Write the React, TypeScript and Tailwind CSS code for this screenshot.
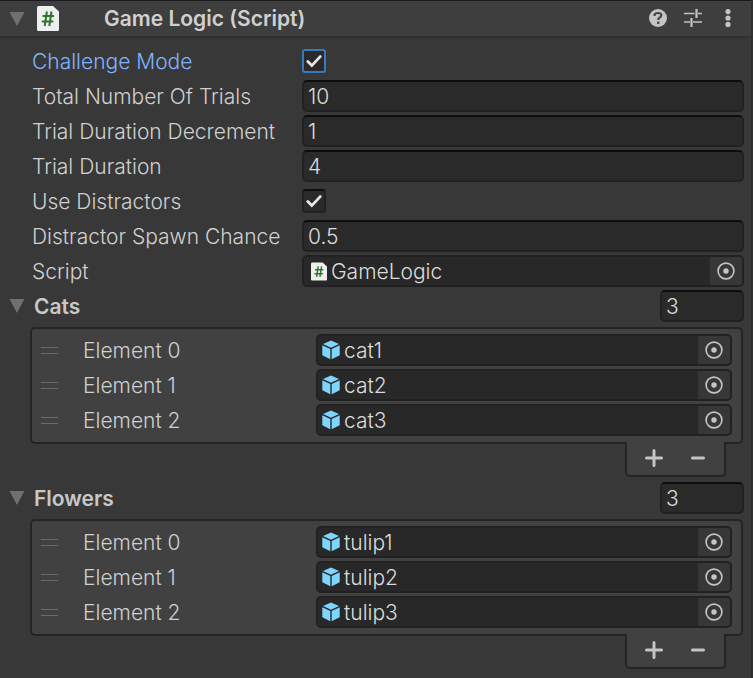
import { useState } from "react";

function Foldout() {
  return (
    <svg viewBox="0 0 16 14" className="h-[14px] w-[16px] shrink-0" fill="#707070" aria-hidden="true">
      <path d="M0.500 0H15.500L8 14Z" />
    </svg>
  );
}

function ScriptIcon({ className }: { className: string }) {
  return (
    <svg viewBox="0 0 22 25" className={className} aria-hidden="true">
      <path d="M1.500 0H16L22 5.500V23.500Q22 25 20.500 25H1.500Q0 25 0 23.500V1.500Q0 0 1.500 0Z" fill="#efefef" />
      <path d="M9.900 5.500L7.700 20M14.500 5.500L12.300 20M5.500 10H17M4.800 15.500H16.300" stroke="#2f7431" strokeWidth="2" fill="none" />
    </svg>
  );
}

function CubeIcon() {
  return (
    <svg viewBox="0 0 18 20" className="h-[20px] w-[18px] shrink-0" fill="#7fd6fd" aria-hidden="true">
      <path d="M9 0.500L17 4L9 7.700L1 4Z" />
      <path d="M0.300 5.200L8.300 9V19.300L0.300 15.200Z" />
      <path d="M17.700 5.200L9.700 9V19.300L17.700 15.200Z" />
    </svg>
  );
}

function PickerIcon() {
  return (
    <svg viewBox="0 0 18 18" className="h-[18px] w-[18px]" aria-hidden="true">
      <circle cx="9" cy="9" r="7.900" fill="none" stroke="#c4c4c4" strokeWidth="1.600" />
      <circle cx="9" cy="9" r="2.700" fill="#c4c4c4" />
    </svg>
  );
}

const inputBox =
  "h-8 min-w-0 rounded-[5px] border-2 border-[#212121] border-t-[#0d0d0d] bg-[#2a2a2a] pt-px pl-1 text-[21px] leading-7 text-[#dcdcdc] outline-none";

function Row({ id, label, active, children }: { id: string; label: string; active?: boolean; children: React.ReactNode }) {
  return (
    <div className="flex h-8 items-center">
      <label htmlFor={id} className={`w-[270px] shrink-0 pt-0.5 whitespace-nowrap ${active ? "text-[#81b4ff]" : "text-[#d0d0d0]"}`}>
        {label}
      </label>
      {children}
    </div>
  );
}

function NumberRow({ id, label, value }: { id: string; label: string; value: string }) {
  return (
    <Row id={id} label={label}>
      <input id={id} type="text" inputMode="decimal" defaultValue={value} className={`${inputBox} flex-1`} />
    </Row>
  );
}

function ToggleRow({ id, label, active }: { id: string; label: string; active?: boolean }) {
  const [on, setOn] = useState(true);
  return (
    <Row id={id} label={label} active={active}>
      <span className="relative flex h-6 w-6">
        <input
          id={id}
          type="checkbox"
          checked={on}
          onChange={(e) => setOn(e.target.checked)}
          className={`h-6 w-6 appearance-none rounded-[3px] border-2 bg-[#2a2a2a] ${active ? "border-[#3a79bb]" : "border-[#212121] border-t-[#0d0d0d]"}`}
        />
        {on && (
          <svg viewBox="0 0 24 24" className="pointer-events-none absolute inset-0 h-6 w-6" aria-hidden="true">
            <path d="M5.800 12.600L9.800 16.600L18.200 7.600" fill="none" stroke="#e8e8e8" strokeWidth="2.800" strokeLinecap="round" />
          </svg>
        )}
      </span>
    </Row>
  );
}

function ObjectField({ id, value, label, icon }: { id: string; value: string; label: string; icon: React.ReactNode }) {
  return (
    <div className="flex h-8 min-w-0 flex-1 items-center overflow-hidden rounded-[5px] border-2 border-[#212121] bg-[#282828] pl-1">
      {icon}
      <input id={id} type="text" readOnly value={value} className="h-7 min-w-0 flex-1 bg-transparent pt-0.5 pl-1 text-[21px] leading-7 text-[#dcdcdc] outline-none" />
      <button type="button" aria-label={`Select ${label}`} className="flex h-7 w-8 shrink-0 items-center justify-center bg-[#373737]">
        <PickerIcon />
      </button>
    </div>
  );
}

function ListSection({ title, items }: { title: string; items: string[] }) {
  const key = title.toLowerCase();
  return (
    <section className="flex flex-col gap-[5px] pr-[9px]">
      <div className="flex h-8 items-center pl-[9px]">
        <button type="button" aria-label={`Toggle ${title}`}>
          <Foldout />
        </button>
        <label htmlFor={`${key}-size`} className="flex-1 pt-0.5 pl-[9px] font-semibold text-[#c8c8c8]">
          {title}
        </label>
        <input id={`${key}-size`} type="text" inputMode="numeric" defaultValue={items.length} className={`${inputBox} w-[84px]`} />
      </div>
      <div className="flex flex-col pr-px pl-[30px]">
        <div className="flex flex-col gap-[3px] rounded-[5px] border-2 border-[#242424] bg-[#414141] pt-[5px] pr-[9px] pb-[6px] pl-[9px]">
          {items.map((item, i) => (
            <div key={item} className="flex h-8 items-center">
              <span className="h-[7px] w-[17px] shrink-0 border-y border-[#6a6a6a]" />
              <label htmlFor={`${key}-${i}`} className="w-[258px] shrink-0 pt-0.5 pl-[25px] text-[#d0d0d0]">
                Element {i}
              </label>
              <ObjectField id={`${key}-${i}`} value={item} label={item} icon={<CubeIcon />} />
            </div>
          ))}
        </div>
        <div className="-mt-[2px] mr-[17px] flex h-[35px] w-[101px] items-start justify-center self-end rounded-b-[5px] border-2 border-t-0 border-[#242424] bg-[#414141]">
          <button type="button" aria-label={`Add to ${title}`} className="flex h-8 w-11 items-center justify-center">
            <svg viewBox="0 0 18 18" className="h-[18px] w-[18px]" aria-hidden="true">
              <path d="M9 1.500V16.500M1.500 9H16.500" stroke="#c4c4c4" strokeWidth="3" strokeLinecap="round" />
            </svg>
          </button>
          <button type="button" aria-label={`Remove from ${title}`} className="flex h-8 w-11 items-center justify-center">
            <svg viewBox="0 0 18 18" className="h-[18px] w-[18px]" aria-hidden="true">
              <path d="M3.500 9H14.500" stroke="#c4c4c4" strokeWidth="3" strokeLinecap="round" />
            </svg>
          </button>
        </div>
      </div>
    </section>
  );
}

export default function App() {
  return (
    <main className="min-h-screen border-r-2 border-[#303030] bg-[#383838] font-['Inter','Liberation_Sans',sans-serif] text-[21px] leading-7 font-light">
      <header className="flex h-[38px] items-center border-t border-b-2 border-t-[#1a1a1a] border-b-[#303030] bg-[#3e3e3e] pr-[14px] pl-[9px]">
        <button type="button" aria-label="Toggle component">
          <Foldout />
        </button>
        <ScriptIcon className="ml-3 h-[25px] w-[22px] shrink-0" />
        <h1 className="flex-1 pl-[45px] font-semibold whitespace-nowrap text-[#d0d0d0]">Game Logic (Script)</h1>
        <div className="flex items-center gap-[17px] pb-px">
          <button type="button" aria-label="Help">
            <svg viewBox="0 0 18 18" className="h-[18px] w-[18px]" aria-hidden="true">
              <circle cx="9" cy="9" r="9" fill="#c4c4c4" />
              <path d="M5.500 7V6.500Q5.500 4 9 4Q12.300 4 12.300 6.300Q12.300 7.800 10.500 8.700Q9.200 9.400 9.200 11" fill="none" stroke="#484848" strokeWidth="2.200" />
              <path d="M8 12.500H10.400V14.900H8Z" fill="#484848" />
            </svg>
          </button>
          <button type="button" aria-label="Presets">
            <svg viewBox="0 0 18 18" className="h-[18px] w-[18px]" fill="none" stroke="#c4c4c4" aria-hidden="true">
              <path d="M0 4.500H10.500M14 4.500H18M0 13H6M9 13H18" strokeWidth="1.600" />
              <path d="M12.500 0V9M7.500 9V18" strokeWidth="2.200" />
            </svg>
          </button>
          <button type="button" aria-label="More options">
            <svg viewBox="0 0 18 18" className="h-[18px] w-[18px]" fill="#c4c4c4" aria-hidden="true">
              <circle cx="9" cy="2.600" r="2.600" />
              <circle cx="9" cy="9" r="2.600" />
              <circle cx="9" cy="15.400" r="2.600" />
            </svg>
          </button>
        </div>
      </header>
      <div className="-mr-[2px] flex flex-col gap-[3px] pt-[7px]">
        <div className="flex flex-col gap-[3px] pr-[9px] pl-8">
          <ToggleRow id="challenge" label="Challenge Mode" active />
          <NumberRow id="trials" label="Total Number Of Trials" value="10" />
          <NumberRow id="decrement" label="Trial Duration Decrement" value="1" />
          <NumberRow id="duration" label="Trial Duration" value="4" />
          <ToggleRow id="distractors" label="Use Distractors" />
          <NumberRow id="spawn" label="Distractor Spawn Chance" value="0.5" />
          <Row id="script" label="Script">
            <ObjectField id="script" value="GameLogic" label="script" icon={<ScriptIcon className="ml-[3px] h-[19px] w-[16px] shrink-0" />} />
          </Row>
        </div>
        <div className="flex flex-col gap-[5px]">
          <ListSection title="Cats" items={["cat1", "cat2", "cat3"]} />
          <ListSection title="Flowers" items={["tulip1", "tulip2", "tulip3"]} />
        </div>
      </div>
    </main>
  );
}
